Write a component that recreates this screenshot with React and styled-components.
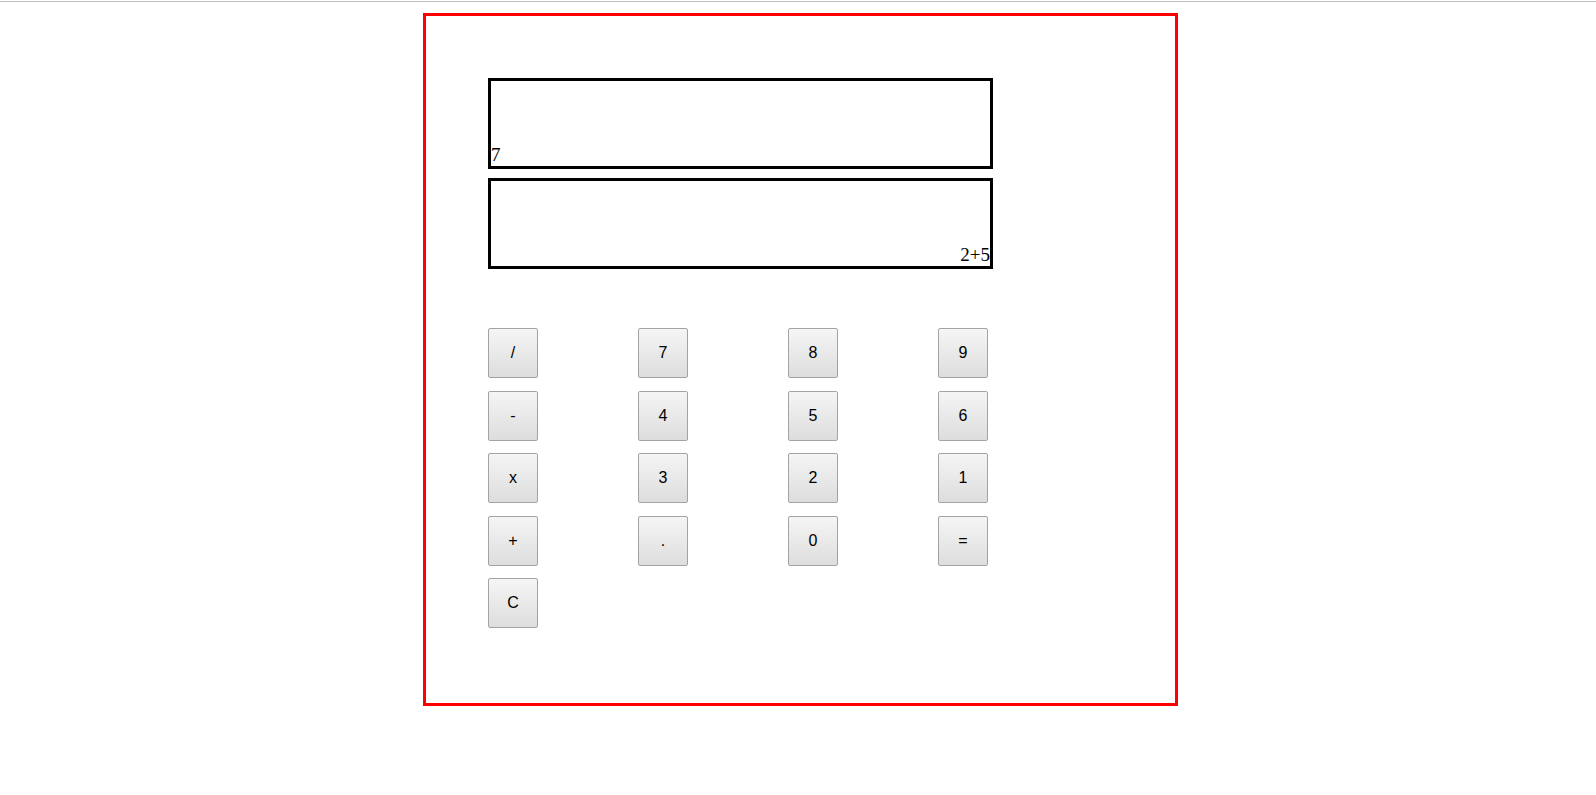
import React from "react";
import styled, { createGlobalStyle } from "styled-components";

const Global = createGlobalStyle`
  html, body { margin: 0; padding: 0; background: #ffffff; }
  body { font-family: "Liberation Serif", "Times New Roman", serif; }
  * { box-sizing: border-box; }
`;

const TopRule = styled.div`
  margin-top: 1px;
  height: 1px;
  background: #bdbdbd;
`;

const Frame = styled.div`
  margin: 11px 0 0 423px;
  width: 755px;
  height: 693px;
  border: 3px solid #ff0000;
  padding: 62px 0 0 62px;
`;

const Display = styled.div`
  width: 505px;
  height: 91px;
  border: 3px solid #000000;
  display: flex;
  align-items: flex-end;
  justify-content: ${(p) => (p.$align === "right" ? "flex-end" : "flex-start")};
  font-family: "Liberation Serif", "Times New Roman", serif;
  font-size: 19px;
  line-height: 1.1;
  color: #000;
  margin-top: ${(p) => p.$gap || 0}px;
`;

const Keypad = styled.div`
  margin-top: 59px;
  display: grid;
  grid-template-columns: repeat(4, 150px);
  grid-auto-rows: 50px;
  row-gap: 12.6px;
  justify-items: start;
`;

const Key = styled.button`
  width: 50px;
  height: 50px;
  padding: 0;
  border: 1px solid #a3a3a3;
  border-radius: 2px;
  background: linear-gradient(#f5f5f5, #dddddd);
  font-family: "Liberation Sans", Arial, sans-serif;
  font-size: 16px;
  color: #000;
  cursor: pointer;
`;

const keys = ["/", "7", "8", "9", "-", "4", "5", "6", "x", "3", "2", "1", "+", ".", "0", "=", "C"];

export default function App() {
  return (
    <>
      <Global />
      <TopRule />
      <Frame>
        <Display $align="left">7</Display>
        <Display $align="right" $gap={9}>2+5</Display>
        <Keypad>
          {keys.map((k) => (
            <Key key={k}>{k}</Key>
          ))}
        </Keypad>
      </Frame>
    </>
  );
}
